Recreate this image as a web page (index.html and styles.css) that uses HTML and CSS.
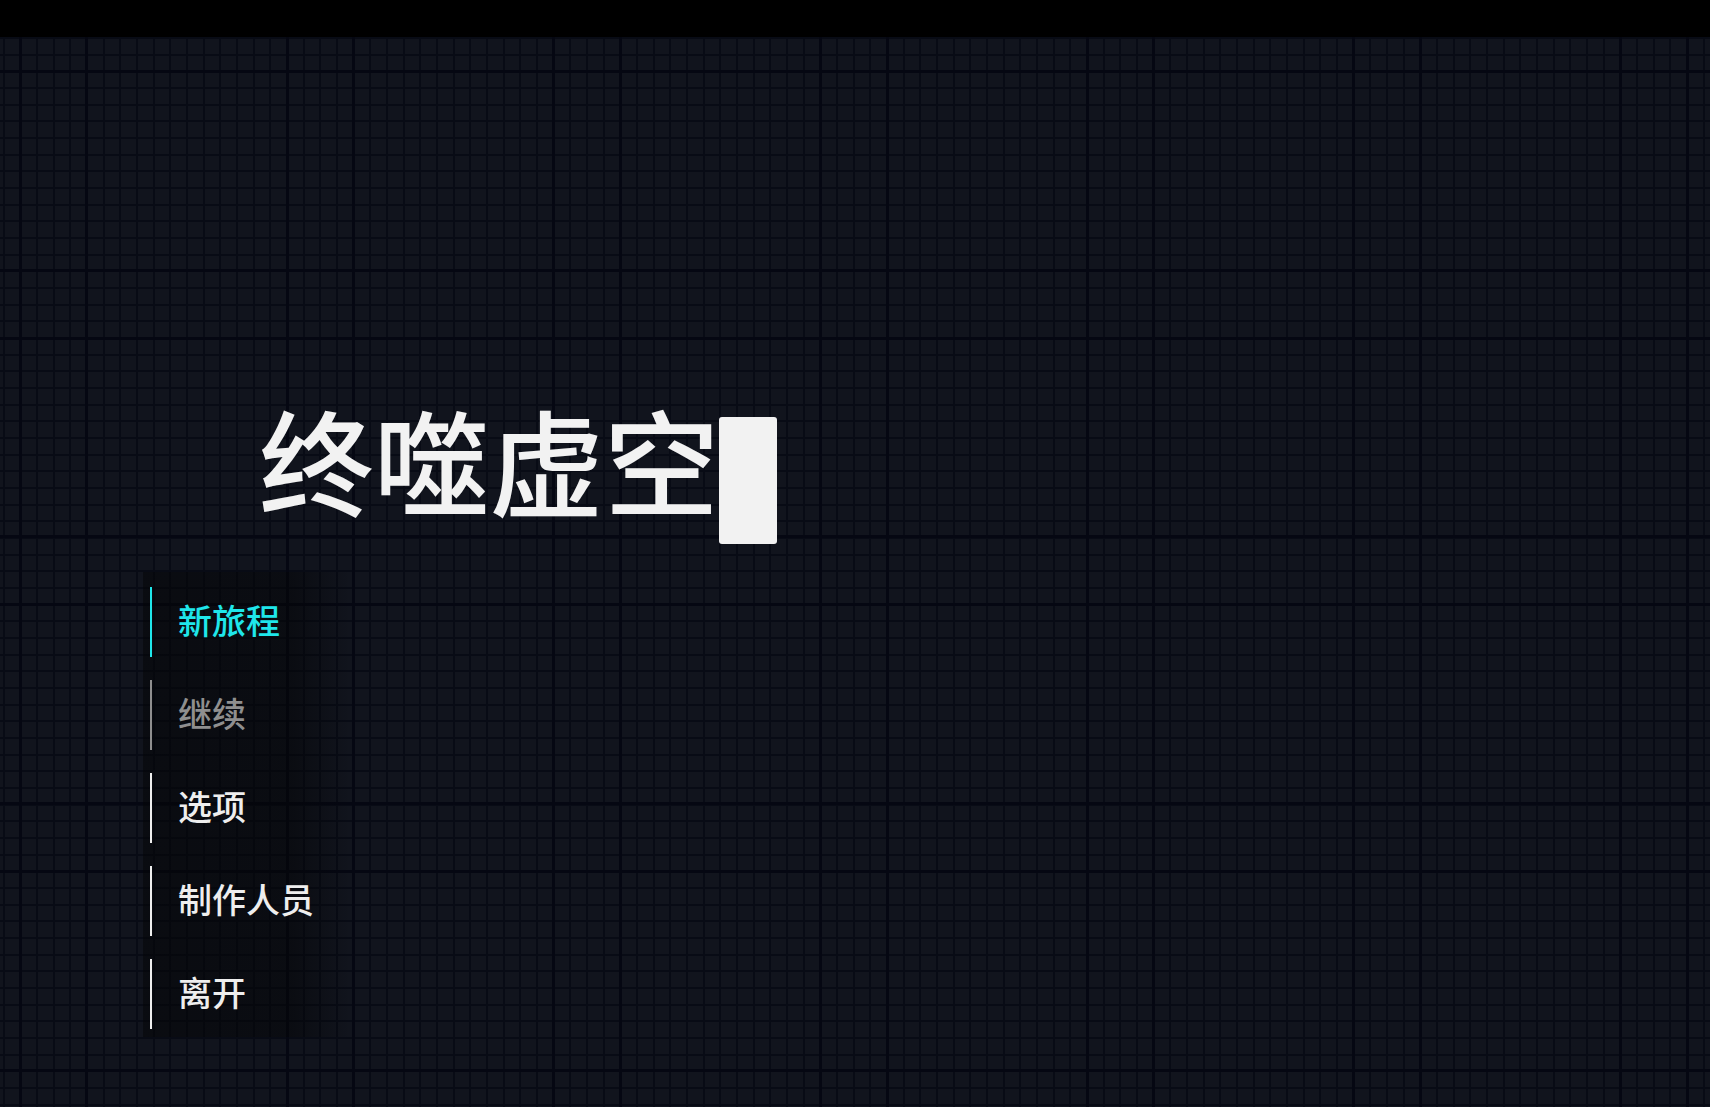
FILE: index.html
```html
<!DOCTYPE html>
<html lang="zh-CN">
<head>
<meta charset="utf-8">
<title>终噬虚空</title>
<link rel="stylesheet" href="styles.css">
</head>
<body>
<div class="topbar"></div>
<main class="screen">
  <h1 class="title"><span class="title-text">终噬虚空</span><span class="cursor"></span></h1>
  <nav class="menu">
    <div class="item active">新旅程</div>
    <div class="item disabled">继续</div>
    <div class="item">选项</div>
    <div class="item">制作人员</div>
    <div class="item">离开</div>
  </nav>
</main>
</body>
</html>
```

FILE: styles.css
```css
html, body {
  margin: 0;
  padding: 0;
}
body {
  width: 1710px;
  height: 1107px;
  overflow: hidden;
  background-color: #11141d;
  background-image:
    repeating-linear-gradient(to right, transparent 0 19px, #050712 19px 22px, transparent 22px 85.5px, #050712 85.5px 88.5px, transparent 88.5px 266.667px),
    repeating-linear-gradient(to bottom, transparent 0 2px, #050712 2px 5px, transparent 5px 70px, #050712 70px 73px, transparent 73px 266.667px),
    repeating-linear-gradient(to right, transparent 0 2.5px, #080b15 2.5px 4.5px, transparent 4.5px 16.667px),
    repeating-linear-gradient(to bottom, transparent 0 3.5px, #080b15 3.5px 5.5px, transparent 5.5px 16.667px);
  font-family: "Noto Sans CJK SC", "Noto Sans", sans-serif;
  color: #eeeeee;
}
.topbar {
  height: 37px;
  background: #000;
}
.screen {
  display: flex;
  flex-direction: column;
  padding-left: 143px;
}
.title {
  margin: 346px 0 0 116px;
  display: flex;
  align-items: flex-start;
  font-size: 115px;
  font-weight: 500;
  line-height: 1;
  color: #f2f2f2;
}
.title-text {
  display: block;
  margin-top: 18px;
}
.cursor {
  display: block;
  width: 58px;
  height: 127px;
  margin-left: 0;
  margin-top: 34px;
  background: #f2f2f2;
  border-radius: 3px;
}
.menu {
  margin-top: 28px;
  width: 200px;
  padding: 15px 0 8px 7px;
  display: flex;
  flex-direction: column;
  gap: 23px;
  background: linear-gradient(to right, rgba(4, 5, 7, 0.55) 0%, rgba(4, 5, 7, 0.5) 72%, rgba(4, 5, 7, 0) 100%);
}
.item {
  height: 70px;
  box-sizing: border-box;
  padding-bottom: 5px;
  display: flex;
  align-items: center;
  padding-left: 26px;
  border-left: 2px solid #eeeeee;
  font-size: 34px;
  font-weight: 500;
  white-space: nowrap;
  color: #eeeeee;
}
.item.active {
  color: #1fe6ea;
  border-left-color: #1fe6ea;
}
.item.disabled {
  color: #8f8f8f;
  border-left-color: #8f8f8f;
}
```
